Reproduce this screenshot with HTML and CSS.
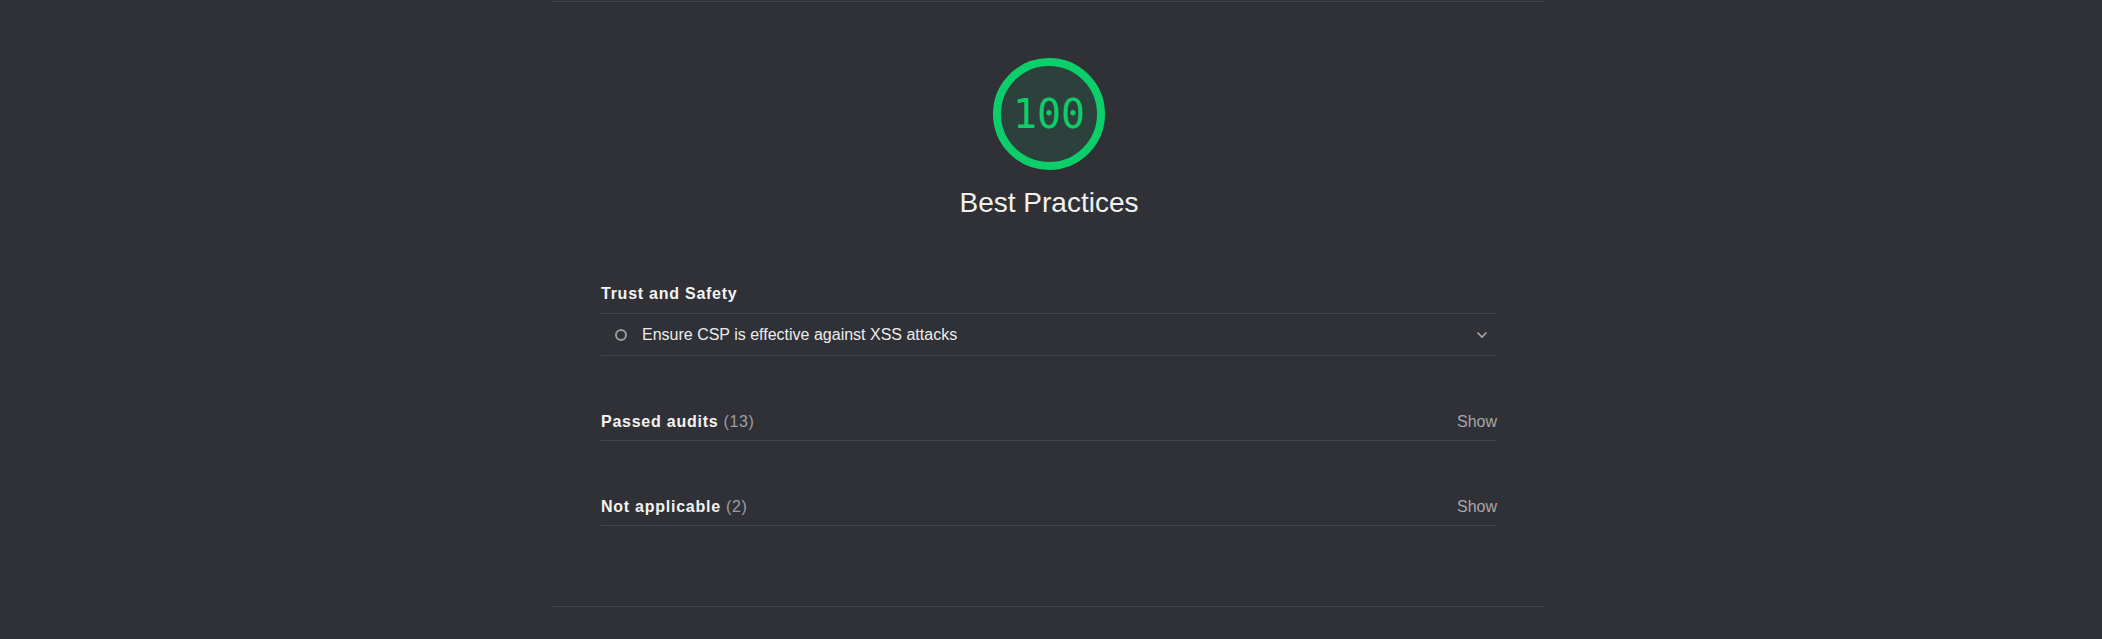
FILE: index.html
```html
<!DOCTYPE html>
<html lang="en">
<head>
<meta charset="utf-8">
<title>Best Practices</title>
<link rel="stylesheet" href="styles.css">
</head>
<body>
<div class="page">
  <section class="category">
    <div class="category-header">
      <div class="gauge">
        <svg class="gauge-svg" viewBox="0 0 112 112" width="112" height="112" aria-hidden="true">
          <circle cx="56" cy="56" r="52" fill="rgba(12,206,107,0.1)" stroke="#0cce6b" stroke-width="8"/>
        </svg>
        <span class="gauge-score">100</span>
      </div>
      <h2 class="category-title">Best Practices</h2>
    </div>

    <div class="group group-first">
      <div class="group-header">
        <span class="group-title">Trust and Safety</span>
      </div>
      <div class="audit">
        <span class="audit-icon"></span>
        <span class="audit-text">Ensure CSP is effective against XSS attacks</span>
        <svg class="chevron" viewBox="0 0 12 8" width="12" height="8" aria-hidden="true">
          <polyline points="1.5,1.5 6,6 10.5,1.5" fill="none" stroke="#a8a8ab" stroke-width="1.6"/>
        </svg>
      </div>
    </div>

    <div class="group">
      <div class="group-header clump">
        <span class="group-title">Passed audits <span class="count">(13)</span></span>
        <span class="show">Show</span>
      </div>
    </div>

    <div class="group">
      <div class="group-header clump">
        <span class="group-title">Not applicable <span class="count">(2)</span></span>
        <span class="show">Show</span>
      </div>
    </div>
  </section>
</div>
</body>
</html>
```

FILE: styles.css
```css
html, body {
  margin: 0;
  padding: 0;
  background: #303136;
}

body {
  font-family: "Liberation Sans", Arial, Helvetica, sans-serif;
  color: #ececec;
}

.page {
  width: 992px;
  margin-left: calc(50% - 498px);
  padding-top: 1px;
}

.category {
  border-top: 1px solid #46474b;
  border-bottom: 1px solid #46474b;
  padding: 56px 48px 80px;
}

.category-header {
  display: flex;
  flex-direction: column;
  align-items: center;
}

.gauge {
  position: relative;
  width: 112px;
  height: 112px;
}

.gauge-svg {
  display: block;
}

.gauge-score {
  position: absolute;
  inset: 0;
  display: flex;
  align-items: center;
  justify-content: center;
  font-family: "DejaVu Sans Mono", "Liberation Mono", monospace;
  font-size: 40px;
  color: #0cce6b;
  line-height: 1;
}

.category-title {
  margin: 15px 0 0;
  font-size: 28px;
  line-height: 36px;
  font-weight: normal;
  color: #f1f1f1;
}

.group {
  margin-top: 56px;
}

.group-first {
  margin-top: 63px;
}

.group-header {
  display: flex;
  justify-content: space-between;
  align-items: baseline;
  font-size: 16px;
  line-height: 20px;
  padding-bottom: 9px;
  border-bottom: 1px solid #46474b;
}

.group-header.clump {
  padding-bottom: 8px;
}

.group-title {
  font-weight: bold;
  letter-spacing: 0.75px;
  color: #f3f3f3;
}

.count {
  font-weight: normal;
  letter-spacing: 0.6px;
  color: #9d9ea1;
}

.show {
  color: #a6a7aa;
}

.audit {
  display: flex;
  align-items: center;
  padding: 11px 9px 10px 14px;
  border-bottom: 1px solid #46474b;
  font-size: 16px;
  line-height: 20px;
}

.audit-icon {
  width: 8px;
  height: 8px;
  border: 2px solid #9a9b9e;
  border-radius: 50%;
  flex: none;
  margin-right: 15px;
}

.audit-text {
  flex: 1;
  color: #ececec;
}

.chevron {
  flex: none;
  display: block;
}
```
